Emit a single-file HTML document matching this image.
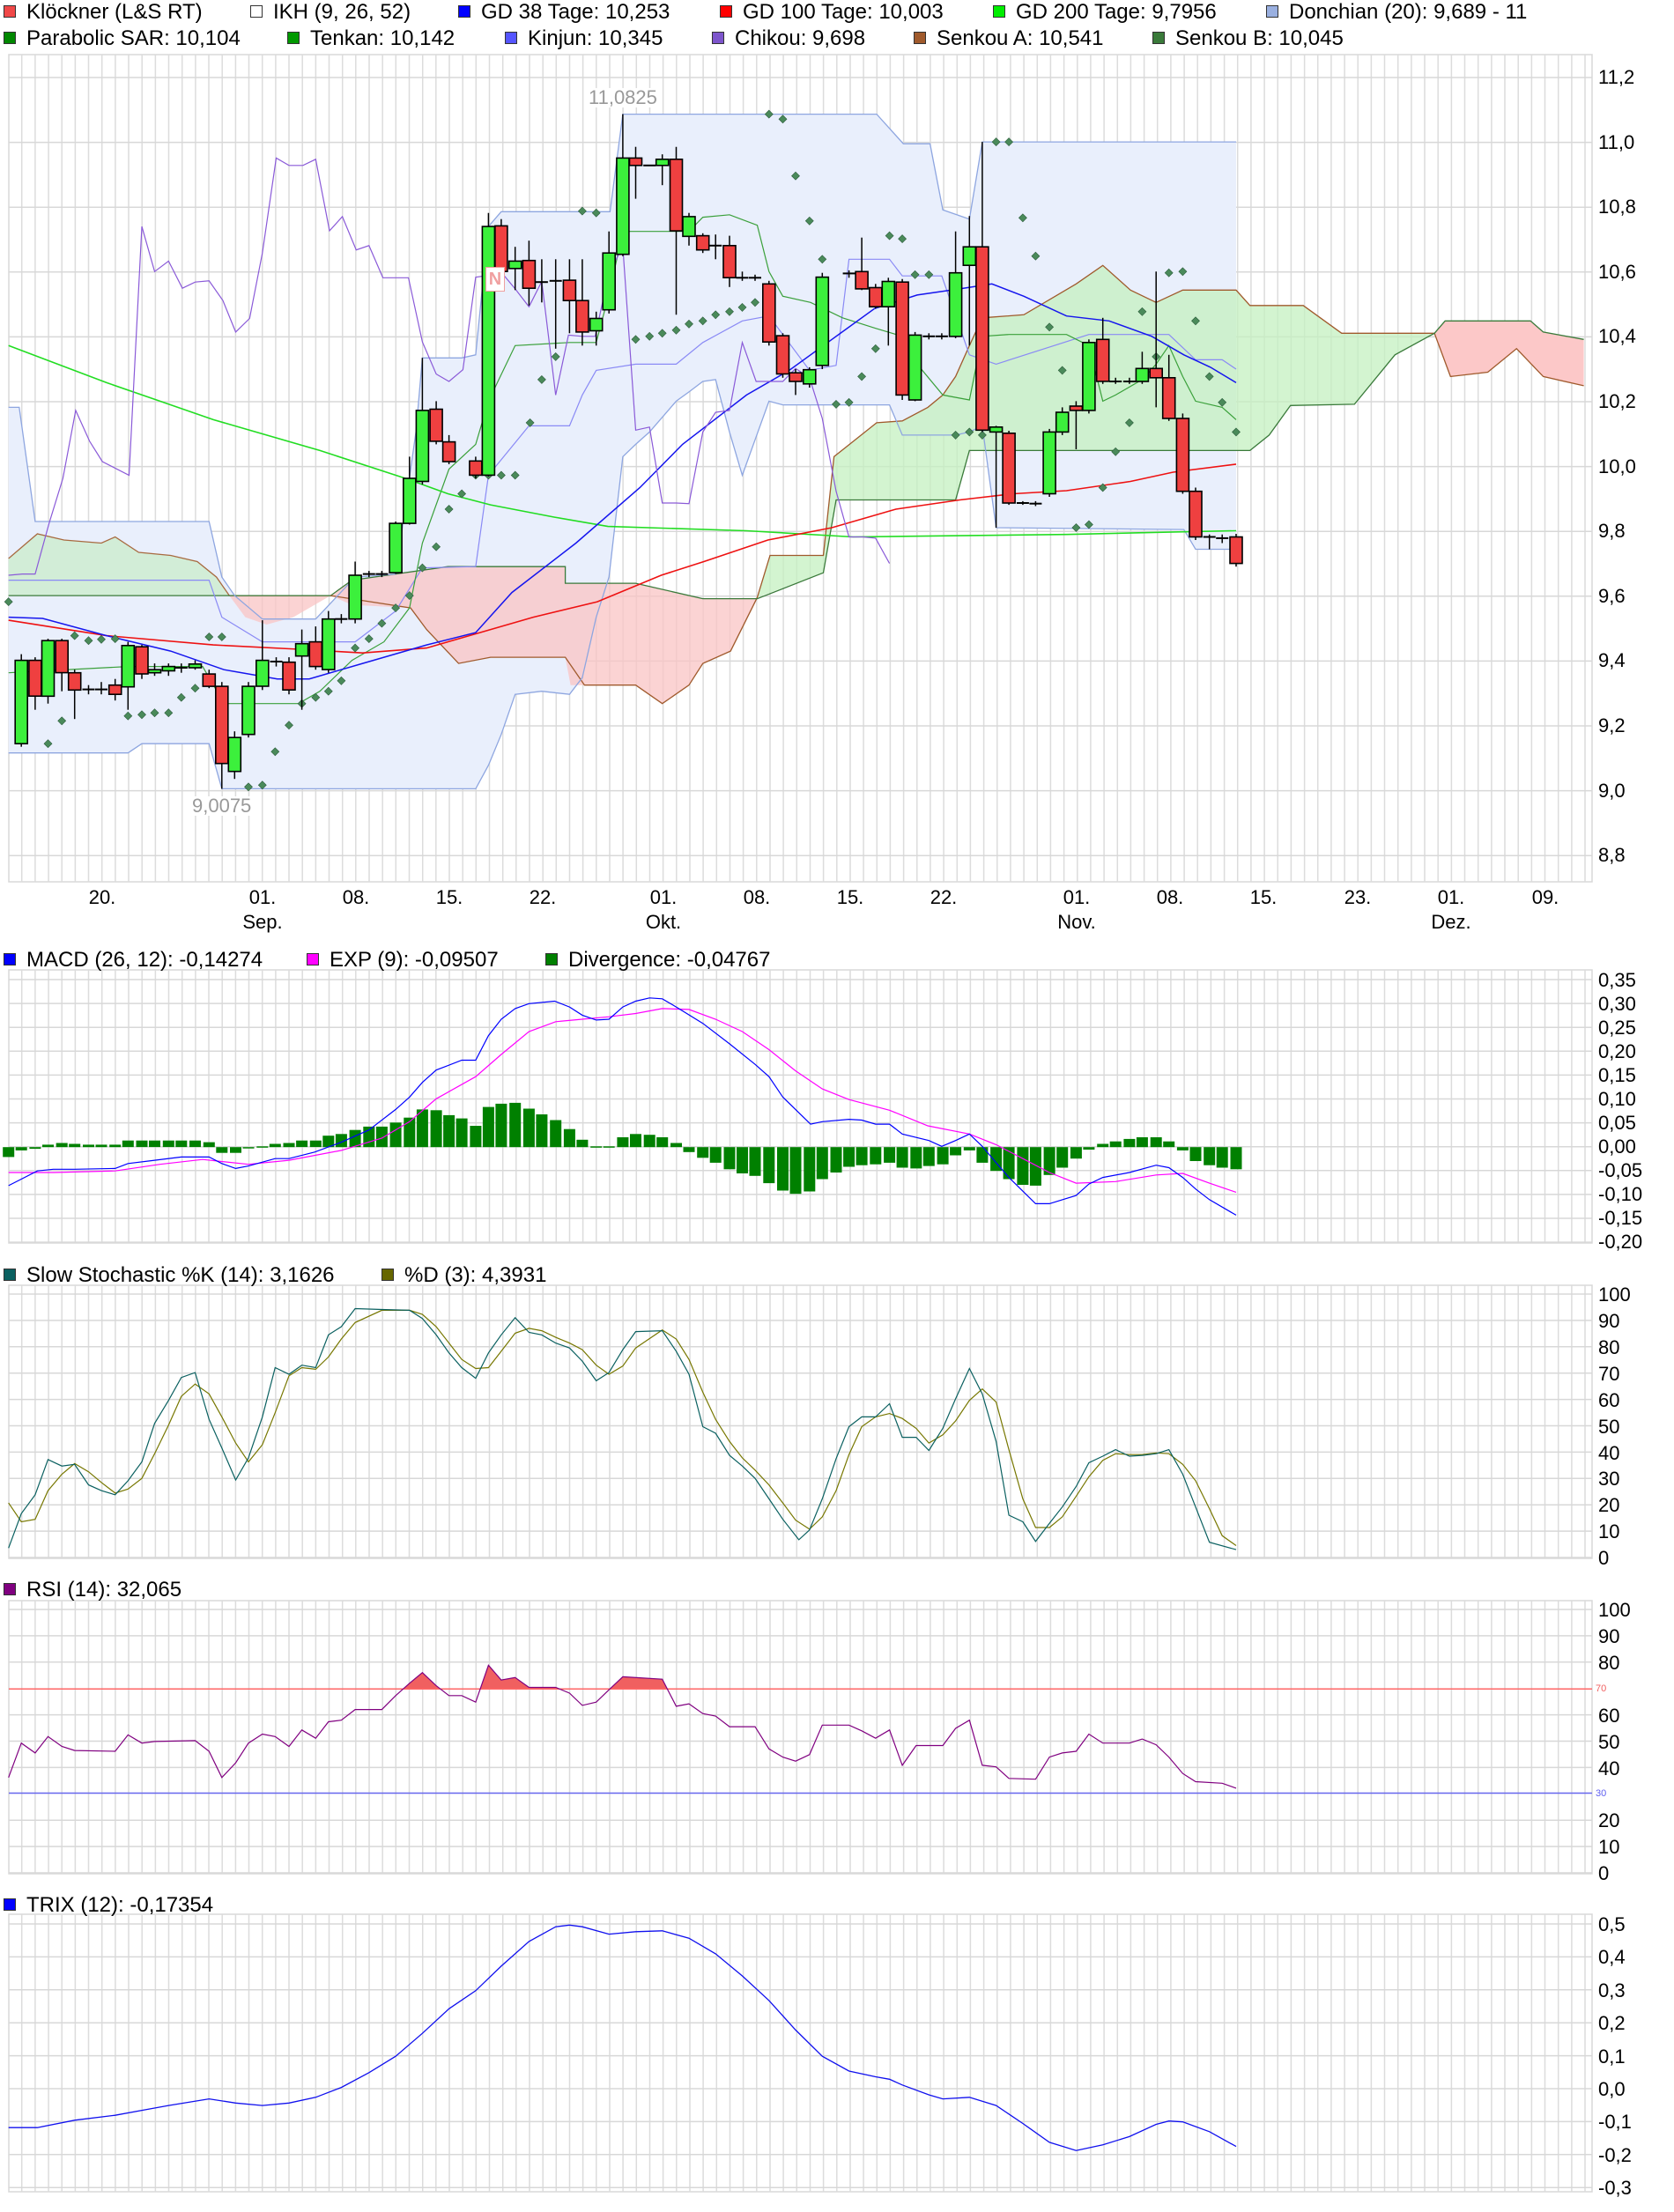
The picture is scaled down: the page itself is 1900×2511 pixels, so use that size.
<!DOCTYPE html>
<html><head><meta charset="utf-8"><style>
html,body{margin:0;padding:0;background:#fff;}
body{width:1900px;height:2511px;position:relative;overflow:hidden;font-family:"Liberation Sans",sans-serif;}
.t{position:absolute;font-size:24px;color:#000;white-space:nowrap;line-height:1;}
.sq{position:absolute;width:14px;height:14px;border:1px solid #333;box-sizing:border-box;}
.yl{position:absolute;left:1814px;font-size:22px;line-height:1;white-space:nowrap;}
.xl{position:absolute;font-size:22px;line-height:1;transform:translateX(-50%);white-space:nowrap;}
svg{position:absolute;left:0;top:0;}
</style></head><body>
<svg id="g" width="1900" height="2511" viewBox="0 0 1900 2511"></svg>

<!-- legends -->
<div class="sq" style="left:4px;top:6px;background:#f04848"></div><div class="t" style="left:30px;top:2px">Klöckner (L&amp;S RT)</div>
<div class="sq" style="left:284px;top:6px;background:#fff"></div><div class="t" style="left:310px;top:2px">IKH (9, 26, 52)</div>
<div class="sq" style="left:520px;top:6px;background:#0000ff"></div><div class="t" style="left:546px;top:2px">GD 38 Tage: 10,253</div>
<div class="sq" style="left:817px;top:6px;background:#ff0000"></div><div class="t" style="left:843px;top:2px">GD 100 Tage: 10,003</div>
<div class="sq" style="left:1127px;top:6px;background:#00ee00"></div><div class="t" style="left:1153px;top:2px">GD 200 Tage: 9,7956</div>
<div class="sq" style="left:1437px;top:6px;background:#9ab0e0"></div><div class="t" style="left:1463px;top:2px">Donchian (20): 9,689 - 11</div>

<div class="sq" style="left:4px;top:36px;background:#008800"></div><div class="t" style="left:30px;top:32px">Parabolic SAR: 10,104</div>
<div class="sq" style="left:326px;top:36px;background:#009900"></div><div class="t" style="left:352px;top:32px">Tenkan: 10,142</div>
<div class="sq" style="left:573px;top:36px;background:#5555ff"></div><div class="t" style="left:599px;top:32px">Kinjun: 10,345</div>
<div class="sq" style="left:808px;top:36px;background:#7d55cc"></div><div class="t" style="left:834px;top:32px">Chikou: 9,698</div>
<div class="sq" style="left:1037px;top:36px;background:#a05a2c"></div><div class="t" style="left:1063px;top:32px">Senkou A: 10,541</div>
<div class="sq" style="left:1308px;top:36px;background:#3a7a3a"></div><div class="t" style="left:1334px;top:32px">Senkou B: 10,045</div>

<div class="sq" style="left:4px;top:1082px;background:#0000ff"></div><div class="t" style="left:30px;top:1078px">MACD (26, 12): -0,14274</div>
<div class="sq" style="left:348px;top:1082px;background:#ff00ff"></div><div class="t" style="left:374px;top:1078px">EXP (9): -0,09507</div>
<div class="sq" style="left:619px;top:1082px;background:#008000"></div><div class="t" style="left:645px;top:1078px">Divergence: -0,04767</div>

<div class="sq" style="left:4px;top:1440px;background:#0a6060"></div><div class="t" style="left:30px;top:1436px">Slow Stochastic %K (14): 3,1626</div>
<div class="sq" style="left:433px;top:1440px;background:#666600"></div><div class="t" style="left:459px;top:1436px">%D (3): 4,3931</div>

<div class="sq" style="left:4px;top:1797px;background:#800080"></div><div class="t" style="left:30px;top:1793px">RSI (14): 32,065</div>

<div class="sq" style="left:4px;top:2155px;background:#0000ff"></div><div class="t" style="left:30px;top:2151px">TRIX (12): -0,17354</div>

<!-- main y labels -->
<div class="yl" style="top:77px">11,2</div>
<div class="yl" style="top:151px">11,0</div>
<div class="yl" style="top:224px">10,8</div>
<div class="yl" style="top:298px">10,6</div>
<div class="yl" style="top:371px">10,4</div>
<div class="yl" style="top:445px">10,2</div>
<div class="yl" style="top:519px">10,0</div>
<div class="yl" style="top:592px">9,8</div>
<div class="yl" style="top:666px">9,6</div>
<div class="yl" style="top:739px">9,4</div>
<div class="yl" style="top:813px">9,2</div>
<div class="yl" style="top:887px">9,0</div>
<div class="yl" style="top:960px">8,8</div>

<!-- date labels -->
<div class="xl" style="left:116px;top:1008px">20.</div>
<div class="xl" style="left:298px;top:1008px">01.</div>
<div class="xl" style="left:404px;top:1008px">08.</div>
<div class="xl" style="left:510px;top:1008px">15.</div>
<div class="xl" style="left:616px;top:1008px">22.</div>
<div class="xl" style="left:753px;top:1008px">01.</div>
<div class="xl" style="left:859px;top:1008px">08.</div>
<div class="xl" style="left:965px;top:1008px">15.</div>
<div class="xl" style="left:1071px;top:1008px">22.</div>
<div class="xl" style="left:1222px;top:1008px">01.</div>
<div class="xl" style="left:1328px;top:1008px">08.</div>
<div class="xl" style="left:1434px;top:1008px">15.</div>
<div class="xl" style="left:1541px;top:1008px">23.</div>
<div class="xl" style="left:1647px;top:1008px">01.</div>
<div class="xl" style="left:1754px;top:1008px">09.</div>
<div class="xl" style="left:298px;top:1036px">Sep.</div>
<div class="xl" style="left:753px;top:1036px">Okt.</div>
<div class="xl" style="left:1222px;top:1036px">Nov.</div>
<div class="xl" style="left:1647px;top:1036px">Dez.</div>

<!-- MACD labels -->
<div class="yl" style="top:1102px">0,35</div>
<div class="yl" style="top:1129px">0,30</div>
<div class="yl" style="top:1156px">0,25</div>
<div class="yl" style="top:1183px">0,20</div>
<div class="yl" style="top:1210px">0,15</div>
<div class="yl" style="top:1237px">0,10</div>
<div class="yl" style="top:1264px">0,05</div>
<div class="yl" style="top:1291px">0,00</div>
<div class="yl" style="top:1318px">-0,05</div>
<div class="yl" style="top:1345px">-0,10</div>
<div class="yl" style="top:1372px">-0,15</div>
<div class="yl" style="top:1399px">-0,20</div>

<!-- Stoch labels -->
<div class="yl" style="top:1459px">100</div>
<div class="yl" style="top:1489px">90</div>
<div class="yl" style="top:1519px">80</div>
<div class="yl" style="top:1549px">70</div>
<div class="yl" style="top:1579px">60</div>
<div class="yl" style="top:1609px">50</div>
<div class="yl" style="top:1639px">40</div>
<div class="yl" style="top:1668px">30</div>
<div class="yl" style="top:1698px">20</div>
<div class="yl" style="top:1728px">10</div>
<div class="yl" style="top:1758px">0</div>

<!-- RSI labels -->
<div class="yl" style="top:1817px">100</div>
<div class="yl" style="top:1847px">90</div>
<div class="yl" style="top:1877px">80</div>
<div class="yl" style="top:1937px">60</div>
<div class="yl" style="top:1967px">50</div>
<div class="yl" style="top:1997px">40</div>
<div class="yl" style="top:2056px">20</div>
<div class="yl" style="top:2086px">10</div>
<div class="yl" style="top:2116px">0</div>
<div class="yl" style="top:1912px;left:1811px;font-size:11px;color:#f06060">70</div>
<div class="yl" style="top:2031px;left:1811px;font-size:11px;color:#6060f0">30</div>

<!-- TRIX labels -->
<div class="yl" style="top:2174px">0,5</div>
<div class="yl" style="top:2211px">0,4</div>
<div class="yl" style="top:2249px">0,3</div>
<div class="yl" style="top:2286px">0,2</div>
<div class="yl" style="top:2324px">0,1</div>
<div class="yl" style="top:2361px">0,0</div>
<div class="yl" style="top:2398px">-0,1</div>
<div class="yl" style="top:2436px">-0,2</div>
<div class="yl" style="top:2473px">-0,3</div>

<div class="t" style="left:666px;top:100px;color:#999;background:#fff;padding:0 2px;font-size:22px">11,0825</div>
<div class="t" style="left:216px;top:904px;color:#999;background:#fff;padding:0 2px;font-size:22px">9,0075</div>
<div style="position:absolute;left:551px;top:303px;width:20px;height:26px;border:1px solid #f0a0a0;background:#fff;color:#f0a0a0;font:bold 20px 'Liberation Sans',sans-serif;text-align:center;line-height:26px">N</div>

<script>
(function(){
var S=document.getElementById('g');var h='';
var XF=1.2105;
function X(z){return z*XF;}
function Y1(z){return z*0.7006;}
function Y2(z){return 1050+z*0.9306;}
function pts(a,fy){return a.map(function(p){return X(p[0]).toFixed(1)+','+fy(p[1]).toFixed(1);}).join(' ');}
function pl(a,fy,c,w,extra){h+='<polyline points="'+pts(a,fy)+'" fill="none" stroke="'+c+'" stroke-width="'+(w||1.3)+'" '+(extra||'')+'/>';}
function pg(a,fy,f,extra){h+='<polygon points="'+pts(a,fy)+'" fill="'+f+'" stroke="none" '+(extra||'')+'/>';}
function grid(top,bot,hl){
  h+='<rect x="10" y="'+top+'" width="1797" height="'+(bot-top)+'" fill="#fff" stroke="#d8d8d8" stroke-width="1.5"/>';
  for(var k=-33;k<=86;k++){var x=510+15.165*k;if(x<10||x>1807)continue;h+='<line x1="'+x.toFixed(1)+'" y1="'+top+'" x2="'+x.toFixed(1)+'" y2="'+bot+'" stroke="#dcdcdc" stroke-width="1.5"/>';}
  hl.forEach(function(y){h+='<line x1="10" y1="'+y.toFixed(1)+'" x2="1807" y2="'+y.toFixed(1)+'" stroke="#d8d8d8" stroke-width="1.5"/>';});
}
var hl=[];for(var p=11.2;p>8.7;p-=0.2){hl.push(161.6+(11.0-p)*368);}
grid(62,1001,hl);
var dU=[[8,660],[18,660],[33,845],[196,845],[208,935],[220,965],[246,1003],[296,1003],[333,935],[371,930],[390,700],[396,580],[433,580],[446,575],[458,367],[470,343],[572,343],[584,185],[822,185],[847,233],[872,233],[884,340],[909,355],[921,230],[1159,230]];
var dL=[[8,1220],[120,1220],[133,1205],[196,1205],[208,1278],[446,1278],[458,1240],[470,1190],[483,1125],[508,1120],[534,1125],[546,1098],[559,1000],[571,935],[584,740],[596,720],[609,700],[634,650],[646,635],[659,618],[671,615],[684,700],[696,770],[721,650],[734,656],[834,656],[846,705],[896,705],[909,700],[921,690],[934,855],[1110,858],[1121,890],[1159,890]];
pg(dU.concat(dL.slice().reverse()),Y1,'#e9effc');
var g1A=[[8,905],[35,865],[60,875],[95,880],[108,870],[130,895],[160,900],[185,910],[203,935],[215,965]],g1B=[[215,965],[8,965]];
pg(g1A.concat(g1B),Y1,'#c8ecc8','opacity="0.7"');
var r1=[[215,965],[230,1000],[250,1012],[275,1000],[300,975],[310,965],[330,940],[420,918],[530,918],[530,945],[596,945],[659,970],[710,970],[685,1055],[659,1075],[646,1110],[621,1140],[596,1110],[548,1110],[535,1110],[530,1065],[460,1065],[430,1075],[400,1020],[385,985],[330,980],[310,965]];
pg(r1,Y1,'#f9c4c4','opacity="0.75"');
var gA=[[710,968],[722,900],[772,900],[782,740],[822,685],[846,682],[870,660],[884,640],[896,610],[909,560],[921,515],[960,510],[1009,460],[1034,430],[1060,470],[1084,490],[1109,470],[1159,470],[1172,495],[1222,495],[1258,540],[1345,540]];
var gB=[[1345,540],[1308,575],[1270,655],[1210,657],[1190,705],[1172,730],[909,730],[896,810],[784,810],[772,928],[710,968]];
pg(gA.concat(gB),Y1,'#c4f0c0','opacity="0.75"');
var rA=[[1345,540],[1360,610],[1395,603],[1422,565],[1447,610],[1485,625]],rB=[[1485,550],[1447,538],[1435,520],[1355,520],[1345,540]];
pg(rA.concat(rB),Y1,'#fcc8c8');
pl(g1A.concat([[310,965]]),Y1,'#a86a40',1.3);
pl([[8,965],[310,965],[330,940]],Y1,'#3a7a3a',1.3);
pl([[310,965],[385,985],[400,1020],[430,1075],[460,1065],[530,1065],[548,1110],[596,1110],[621,1140],[646,1110],[659,1075],[685,1055],[710,968]].concat(gA.slice(1)).concat(rA.slice(1)),Y1,'#a05a2c',1.3);
pl([[330,940],[420,918],[530,918],[530,945],[596,945],[659,970],[710,970]].concat(gB.slice().reverse().slice(1)).concat(rB.slice().reverse().slice(1)),Y1,'#3a7a3a',1.3);
pl(dU,Y1,'#8ea6e0',1.3);pl(dL,Y1,'#8ea6e0',1.3);
pl([[8,940],[120,940],[196,940],[208,1000],[246,1040],[296,1040],[333,1040],[371,990],[396,920],[446,918],[458,770],[496,690],[534,690],[546,640],[559,600],[596,590],[634,590],[659,555],[696,520],[721,512],[759,600],[784,592],[796,420],[834,420],[846,447],[883,447],[909,575],[934,590],[1021,542],[1096,542],[1121,583],[1146,583],[1159,598]],Y1,'#8a8af5',1.2);
pl([[8,1090],[120,1080],[190,1080],[210,1140],[240,1140],[280,1140],[300,1120],[330,1070],[360,1040],[384,985],[396,880],[421,760],[446,720],[458,650],[483,560],[534,555],[559,555],[572,470],[584,375],[646,375],[659,352],[684,348],[710,365],[721,440],[734,480],[760,490],[790,515],[821,532],[846,545],[860,590],[884,640],[909,648],[921,545],[946,542],[1000,542],[1021,560],[1034,650],[1046,640],[1071,615],[1084,590],[1096,560],[1109,610],[1121,650],[1146,660],[1159,680]],Y1,'#3aa03a',1.2);
pl([[8,560],[100,620],[150,650],[200,680],[300,730],[380,775],[420,800],[460,818],[520,838],[570,853],[700,860],[800,870],[900,868],[1000,866],[1100,862],[1159,860]],Y1,'#22dd22',1.6);
pl([[8,1005],[100,1030],[200,1045],[280,1052],[340,1058],[400,1050],[440,1030],[500,1000],[560,975],[620,932],[660,910],[720,875],[780,855],[840,825],[900,810],[950,800],[1000,795],[1060,780],[1100,765],[1159,752]],Y1,'#ee1111',1.6);
pl([[8,1000],[40,1002],[100,1030],[160,1055],[210,1085],[260,1100],[290,1100],[340,1075],[400,1045],[446,1025],[480,960],[540,880],[600,790],[640,720],[700,640],[740,600],[780,550],[820,500],[860,478],[900,468],[930,460],[960,480],[1000,512],[1040,520],[1080,545],[1110,575],[1135,595],[1159,620]],Y1,'#1515ee',1.5);
var C=[[20,'g',1070,1205,1060,1210],[33,'r',1070,1128,1065,1150],[45,'g',1038,1128,1035,1140],[58,'r',1038,1090,1035,1120],[70,'r',1090,1118,1085,1165],[83,'d',1117,1117,1110,1125],[95,'d',1117,1117,1105,1125],[108,'r',1110,1125,1100,1135],[120,'g',1046,1113,1040,1150],[133,'r',1048,1092,1045,1100],[145,'g',1085,1090,1075,1095],[158,'g',1080,1087,1075,1095],[170,'d',1082,1082,1075,1090],[183,'g',1076,1082,1070,1085],[196,'r',1092,1112,1085,1115],[208,'r',1112,1237,1105,1278],[220,'g',1195,1250,1185,1262],[233,'g',1112,1190,1105,1195],[246,'g',1070,1112,1005,1118],[259,'d',1072,1072,1065,1080],[271,'r',1073,1118,1065,1125],[283,'g',1043,1063,1020,1150],[296,'r',1040,1080,1015,1085],[308,'g',1003,1085,990,1090],[320,'d',1003,1003,995,1010],[333,'g',932,1003,910,1010],[346,'d',930,930,925,935],[358,'d',930,930,925,935],[371,'g',848,928,845,930],[384,'g',775,848,740,850],[396,'g',665,780,580,785],[409,'r',663,715,650,720],[421,'r',716,748,705,752],[446,'r',747,770,740,775],[458,'g',367,770,345,772],[470,'r',366,440,355,450],[483,'g',423,435,400,470],[496,'r',422,467,390,495],[508,'d',457,457,420,490],[521,'d',455,455,420,565],[534,'r',454,487,420,540],[546,'r',487,538,420,560],[559,'g',516,536,505,560],[571,'g',410,502,375,508],[584,'g',256,412,185,415],[596,'r',256,268,238,322],[609,'d',268,268,268,268],[621,'g',258,268,250,300],[634,'r',258,374,238,510],[646,'g',351,383,345,398],[659,'r',382,405,378,410],[671,'d',398,398,380,420],[684,'r',398,450,382,465],[696,'d',450,450,440,455],[708,'d',450,450,445,455],[721,'r',460,554,455,560],[734,'r',544,606,540,612],[746,'r',604,618,598,640],[759,'g',599,622,595,628],[771,'g',449,592,442,598],[796,'d',443,443,438,450],[808,'r',440,468,385,470],[821,'r',466,497,460,500],[833,'g',456,497,450,560],[846,'r',457,640,452,648],[858,'g',543,648,538,650],[871,'d',545,545,540,550],[883,'d',545,545,540,550],[896,'g',442,545,375,548],[909,'g',400,430,350,560],[921,'r',400,697,230,700],[934,'g',692,700,690,855],[946,'r',702,815,698,818],[959,'d',815,815,812,818],[971,'d',816,816,812,820],[984,'g',700,800,695,805],[996,'g',668,700,660,705],[1009,'r',658,665,650,728],[1021,'g',555,665,550,670],[1034,'r',550,618,515,622],[1046,'d',618,618,612,622],[1059,'d',618,618,612,622],[1071,'g',597,618,570,622],[1084,'r',597,612,440,660],[1096,'r',612,678,575,682],[1109,'r',678,796,670,800],[1121,'r',796,870,790,875],[1134,'d',870,870,866,890],[1146,'d',872,872,866,880],[1159,'r',870,913,865,918]];
var ch=[];C.forEach(function(c){var cl=(c[1]=='r')?c[3]:c[2];var x=c[0]-325;if(x>=8)ch.push([x,cl]);});
pl(ch,Y1,'#8a5ad8',1.2);
var sar=[[8,975],[45,1205],[58,1168],[70,1030],[83,1038],[95,1036],[108,1035],[120,1160],[133,1158],[145,1155],[158,1155],[170,1130],[183,1115],[196,1032],[208,1032],[233,1275],[246,1272],[258,1218],[271,1175],[283,1140],[296,1130],[308,1120],[320,1103],[333,1050],[346,1035],[358,1010],[371,985],[384,965],[396,920],[409,886],[421,825],[433,800],[446,770],[458,770],[470,770],[483,770],[497,685],[508,615],[521,578],[546,342],[559,345],[596,550],[609,545],[621,540],[634,535],[646,525],[659,520],[671,510],[684,505],[696,498],[708,490],[721,185],[734,193],[746,285],[759,358],[771,420],[784,655],[796,652],[808,610],[821,565],[834,382],[846,387],[858,445],[871,445],[896,705],[909,700],[921,705],[934,230],[946,230],[959,353],[971,415],[984,530],[996,600],[1009,855],[1021,850],[1034,790],[1046,732],[1059,685],[1071,505],[1084,578],[1096,442],[1109,440],[1121,520],[1134,610],[1146,652],[1159,700]];
sar.forEach(function(s){var x=X(s[0]),y=Y1(s[1]);h+='<path d="M'+x.toFixed(1)+' '+(y-4.5).toFixed(1)+'l4.5 4.5l-4.5 4.5l-4.5 -4.5z" fill="#4a8a5a" stroke="#2a5a3a" stroke-width="0.6"/>';});
C.forEach(function(c){var x=X(c[0]),y1=Y1(c[2]),y2=Y1(c[3]);h+='<line x1="'+x.toFixed(1)+'" y1="'+Y1(c[4]).toFixed(1)+'" x2="'+x.toFixed(1)+'" y2="'+Y1(c[5]).toFixed(1)+'" stroke="#000" stroke-width="1.5"/>';
 if(c[1]=='d'){h+='<line x1="'+(x-7).toFixed(1)+'" y1="'+y1.toFixed(1)+'" x2="'+(x+7).toFixed(1)+'" y2="'+y1.toFixed(1)+'" stroke="#000" stroke-width="2"/>';}
 else{var hh=Math.max(y2-y1,2);h+='<rect x="'+(x-7).toFixed(1)+'" y="'+y1.toFixed(1)+'" width="14" height="'+hh.toFixed(1)+'" fill="'+(c[1]=='g'?'#3cf03c':'#ef4040')+'" stroke="#000" stroke-width="1.6"/>';}});
var mh=[];for(var i=0;i<12;i++)mh.push(1112+i*27.1);
grid(1101,1411,mh);
var zero=271;
var bars=[[8,283],[20,275],[33,273],[45,268],[58,266],[70,267],[83,268],[95,268],[108,268],[120,263],[133,263],[145,263],[158,263],[170,263],[183,263],[196,265],[208,278],[221,278],[233,271],[246,270],[258,267],[271,266],[283,263],[296,263],[308,257],[320,255],[333,250],[346,246],[358,246],[371,241],[384,235],[396,225],[409,226],[421,232],[433,236],[446,245],[458,222],[470,218],[483,217],[496,224],[508,231],[521,238],[534,249],[546,262],[559,270],[571,270],[584,259],[596,255],[609,256],[621,259],[634,266],[646,277],[659,284],[671,290],[684,298],[696,303],[708,306],[721,315],[734,324],[746,328],[759,325],[771,310],[784,302],[796,295],[808,293],[821,292],[834,290],[846,296],[859,297],[871,294],[884,292],[896,281],[909,275],[921,290],[934,300],[946,310],[959,317],[971,318],[984,305],[996,296],[1009,285],[1021,274],[1034,267],[1046,264],[1059,261],[1071,259],[1084,259],[1096,264],[1109,275],[1121,288],[1134,293],[1146,296],[1159,298]];
bars.forEach(function(b){var x=X(b[0]),y0=Y2(zero),y=Y2(b[1]);var t=Math.min(y0,y),hh=Math.max(Math.abs(y-y0),1.5);h+='<rect x="'+(x-6.5).toFixed(1)+'" y="'+t.toFixed(1)+'" width="13" height="'+hh.toFixed(1)+'" fill="#008000"/>';});
pl([[8,302],[50,302],[108,300],[150,292],[190,286],[233,292],[271,287],[320,275],[358,260],[384,240],[409,212],[446,185],[470,158],[496,130],[521,118],[546,115],[571,112],[596,108],[621,102],[646,103],[671,115],[696,130],[721,152],[746,178],[771,200],[796,213],[834,226],[870,245],[909,255],[934,268],[959,285],[984,302],[1009,315],[1046,313],[1084,305],[1109,303],[1134,315],[1159,326]],Y2,'#ff00ff',1.2);
pl([[8,318],[20,310],[35,300],[50,298],[70,298],[108,297],[120,291],[145,287],[170,283],[196,283],[208,291],[221,297],[233,294],[258,285],[271,285],[295,277],[320,265],[346,250],[371,225],[384,210],[396,192],[409,177],[433,165],[446,165],[458,135],[470,115],[483,102],[496,96],[520,93],[534,100],[546,110],[559,116],[571,115],[584,100],[596,93],[609,89],[621,90],[634,100],[659,120],[684,145],[708,170],[721,185],[734,210],[760,243],[771,240],[796,237],[808,238],[821,243],[834,243],[846,255],[871,263],[883,270],[896,263],[909,255],[921,270],[934,290],[946,308],[971,340],[984,340],[1009,330],[1021,316],[1034,308],[1059,302],[1084,293],[1096,296],[1109,308],[1121,322],[1134,335],[1159,354]],Y2,'#0000ff',1.2);
var sh=[];for(var i=0;i<=10;i++)sh.push(1469+i*29.9);
grid(1459,1769,sh);
pl([[8,705],[20,728],[33,725],[45,690],[58,670],[70,657],[83,667],[95,680],[108,693],[120,688],[133,675],[145,645],[158,610],[170,575],[183,560],[196,572],[208,600],[221,632],[233,655],[246,634],[258,595],[271,550],[283,540],[296,542],[308,527],[320,505],[333,485],[358,470],[384,470],[396,475],[409,490],[421,510],[433,530],[446,541],[458,540],[470,520],[483,498],[496,492],[508,495],[521,503],[534,510],[546,518],[559,537],[571,548],[584,538],[596,516],[621,494],[634,505],[646,530],[659,570],[671,603],[684,630],[696,650],[708,665],[721,683],[734,705],[746,726],[759,737],[771,722],[784,690],[796,646],[808,612],[821,600],[834,596],[846,602],[859,614],[871,632],[884,622],[896,605],[909,580],[921,566],[934,582],[946,640],[959,700],[971,735],[984,735],[996,722],[1009,697],[1021,673],[1034,653],[1046,645],[1059,646],[1071,646],[1084,644],[1096,645],[1109,658],[1121,678],[1134,712],[1146,745],[1159,757]],Y2,'#777700',1.2);
pl([[8,760],[20,718],[33,695],[45,652],[58,660],[70,658],[83,683],[95,690],[108,695],[120,678],[133,655],[145,608],[158,580],[170,552],[183,546],[196,603],[208,638],[221,677],[233,650],[246,600],[258,540],[271,548],[283,537],[296,540],[308,500],[320,490],[333,468],[358,469],[384,470],[396,480],[409,500],[421,522],[433,540],[446,553],[458,522],[470,500],[483,479],[496,497],[508,500],[521,510],[534,516],[546,532],[559,556],[571,546],[584,518],[596,496],[621,495],[634,520],[646,548],[659,612],[671,620],[684,647],[696,660],[708,675],[721,700],[734,725],[749,750],[759,738],[771,700],[784,651],[796,612],[808,600],[821,600],[834,584],[846,625],[859,625],[871,641],[884,614],[896,578],[909,541],[921,572],[934,630],[946,720],[959,728],[971,752],[984,730],[996,710],[1009,685],[1021,656],[1034,648],[1046,640],[1059,648],[1071,647],[1084,645],[1096,640],[1109,670],[1121,710],[1134,753],[1159,762]],Y2,'#0a6060',1.2);
var rh=[];for(var i=0;i<=10;i++){if(i==3||i==7)continue;rh.push(1827+i*29.9);}
grid(1817,2127,rh);
var rsi=[[8,1040],[20,998],[33,1010],[45,990],[58,1002],[70,1007],[108,1008],[120,988],[133,998],[145,996],[183,995],[196,1008],[208,1040],[221,1022],[233,998],[246,987],[258,990],[271,1002],[283,982],[296,992],[308,972],[320,970],[333,957],[358,957],[371,940],[384,925],[396,912],[409,928],[421,940],[433,940],[446,948],[458,903],[470,921],[483,918],[496,930],[521,930],[534,937],[546,952],[559,948],[571,933],[584,917],[621,920],[634,953],[646,950],[659,962],[671,965],[684,978],[708,978],[721,1005],[734,1015],[746,1020],[759,1012],[771,976],[796,976],[808,983],[821,992],[834,982],[846,1025],[859,1001],[884,1001],[896,980],[909,970],[921,1025],[934,1027],[946,1041],[971,1042],[984,1015],[996,1010],[1009,1008],[1021,987],[1034,998],[1059,998],[1071,993],[1084,1000],[1096,1015],[1109,1035],[1121,1045],[1146,1047],[1159,1053]];
var y70=Y2(932);
h+='<clipPath id="c70"><rect x="0" y="1800" width="1900" height="'+(y70-1800).toFixed(1)+'"/></clipPath>';
pg([[8,932]].concat(rsi).concat([[1159,932]]),Y2,'#f06060','clip-path="url(#c70)"');
h+='<line x1="10" y1="'+y70.toFixed(1)+'" x2="1807" y2="'+y70.toFixed(1)+'" stroke="#ff6666" stroke-width="1.5"/>';
var y30=Y2(1059);h+='<line x1="10" y1="'+y30.toFixed(1)+'" x2="1807" y2="'+y30.toFixed(1)+'" stroke="#6666ee" stroke-width="1.5"/>';
pl(rsi,Y2,'#800080',1.2);
var th=[];for(var i=0;i<=8;i++)th.push(2184+i*37.4);
grid(2173,2488,th);
pl([[8,1467],[35,1467],[70,1458],[108,1452],[133,1446],[158,1440],[196,1432],[221,1437],[246,1440],[271,1437],[296,1430],[320,1418],[346,1400],[371,1380],[396,1352],[421,1322],[446,1300],[470,1270],[496,1240],[521,1222],[534,1220],[546,1222],[571,1231],[596,1228],[621,1227],[646,1236],[671,1255],[696,1282],[721,1312],[746,1348],[771,1380],[796,1398],[821,1405],[834,1408],[846,1415],[871,1427],[884,1432],[909,1430],[934,1440],[959,1462],[984,1485],[1009,1495],[1034,1488],[1059,1478],[1084,1463],[1096,1459],[1109,1460],[1134,1472],[1159,1490]],Y2,'#1010ee',1.3);
S.innerHTML=h;
})();
</script>
</body></html>
